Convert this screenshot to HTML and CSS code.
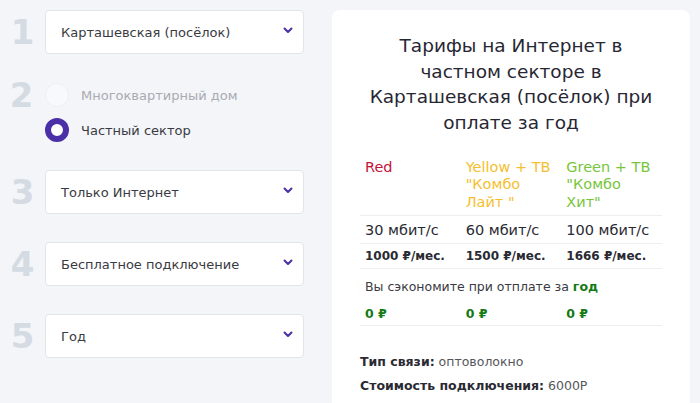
FILE: index.html
```html
<!DOCTYPE html>
<html lang="ru">
<head>
<meta charset="utf-8">
<link rel="stylesheet" href="styles.css">
</head>
<body>
<div class="page">
  <div class="steps">
    <div class="step step-1">
      <div class="num">1</div>
      <div class="select"><span>Карташевская (посёлок)</span><svg class="chev" width="10" height="7" viewBox="0 0 10 7"><path d="M1.5 1.5 L5 5 L8.5 1.5" fill="none" stroke="#4b2fa6" stroke-width="2" stroke-linecap="round" stroke-linejoin="round"/></svg></div>
    </div>
    <div class="step step-2">
      <div class="num">2</div>
      <div class="radios">
        <div class="radio"><span class="dot"></span><span class="rlabel muted">Многоквартирный дом</span></div>
        <div class="radio"><span class="dot on"></span><span class="rlabel">Частный сектор</span></div>
      </div>
    </div>
    <div class="step">
      <div class="num">3</div>
      <div class="select"><span>Только Интернет</span><svg class="chev" width="10" height="7" viewBox="0 0 10 7"><path d="M1.5 1.5 L5 5 L8.5 1.5" fill="none" stroke="#4b2fa6" stroke-width="2" stroke-linecap="round" stroke-linejoin="round"/></svg></div>
    </div>
    <div class="step">
      <div class="num">4</div>
      <div class="select"><span>Бесплатное подключение</span><svg class="chev" width="10" height="7" viewBox="0 0 10 7"><path d="M1.5 1.5 L5 5 L8.5 1.5" fill="none" stroke="#4b2fa6" stroke-width="2" stroke-linecap="round" stroke-linejoin="round"/></svg></div>
    </div>
    <div class="step">
      <div class="num">5</div>
      <div class="select"><span>Год</span><svg class="chev" width="10" height="7" viewBox="0 0 10 7"><path d="M1.5 1.5 L5 5 L8.5 1.5" fill="none" stroke="#4b2fa6" stroke-width="2" stroke-linecap="round" stroke-linejoin="round"/></svg></div>
    </div>
  </div>
  <div class="card">
    <h1 class="title">Тарифы на Интернет в частном секторе в Карташевская (посёлок) при оплате за год</h1>
    <table class="tariffs">
      <tr class="head">
        <td class="red">Red</td>
        <td class="yellow">Yellow + ТВ "Комбо Лайт "</td>
        <td class="green">Green + ТВ "Комбо Хит"</td>
      </tr>
      <tr class="speed">
        <td>30 мбит/с</td>
        <td>60 мбит/с</td>
        <td>100 мбит/с</td>
      </tr>
      <tr class="price">
        <td>1000 ₽/мес.</td>
        <td>1500 ₽/мес.</td>
        <td>1666 ₽/мес.</td>
      </tr>
      <tr class="save-note">
        <td colspan="3">Вы сэкономите при отплате за <b>год</b></td>
      </tr>
      <tr class="save">
        <td>0 ₽</td>
        <td>0 ₽</td>
        <td>0 ₽</td>
      </tr>
    </table>
    <p class="info"><b>Тип связи:</b> оптоволокно</p>
    <p class="info"><b>Стоимость подключения:</b> 6000Р</p>
  </div>
</div>
</body>
</html>
```
FILE: styles.css
```css
html, body {
  margin: 0;
  padding: 0;
  background: #f3f5f9;
  font-family: "DejaVu Sans", "Liberation Sans", sans-serif;
  color: #333;
}
.page {
  display: flex;
  align-items: flex-start;
  height: 403px;
  overflow: hidden;
}
.steps {
  width: 332px;
  flex: none;
  padding-top: 10px;
}
.step {
  display: flex;
  align-items: center;
  margin-top: 28px;
}
.step-1 { margin-top: 0; }
.step-2 { align-items: flex-start; margin-top: 29px; margin-bottom: 2px; }
.num {
  width: 45px;
  text-align: center;
  font-size: 34px;
  font-weight: bold;
  color: #d5dbe3;
  line-height: 40px;
}
.step-2 .num { margin-top: -8px; margin-left: -1px; margin-right: 1px; }
.select {
  width: 259px;
  height: 44px;
  box-sizing: border-box;
  background: #fff;
  border: 1px solid #e1e4e9;
  border-radius: 4px;
  display: flex;
  align-items: center;
  justify-content: space-between;
  padding: 1px 10px 0 15px;
  font-size: 13px;
  color: #3a3a42;
}
.chev { margin-top: -4px; }
.radios {
  display: flex;
  flex-direction: column;
  gap: 11px;
}
.radio {
  display: flex;
  align-items: center;
  height: 24px;
}
.dot {
  width: 24px;
  height: 24px;
  box-sizing: border-box;
  border-radius: 50%;
  background: #f8f9fc;
  border: 1px solid #eef0f4;
  margin-right: 12px;
}
.dot.on {
  background: #fff;
  border: 6px solid #4b2fa6;
}
.rlabel {
  font-size: 13px;
  color: #3a3a42;
}
.rlabel.muted { color: #a9abb2; }
.card {
  margin-top: 10px;
  width: 358px;
  height: 420px;
  flex: none;
  background: #fff;
  border-radius: 8px;
  box-sizing: border-box;
  padding: 23px 28px 0 28px;
}
.title {
  margin: 0 auto;
  width: 292px;
  text-align: center;
  font-size: 18.5px;
  font-weight: normal;
  line-height: 25.7px;
  color: #272733;
}
.tariffs {
  width: 100%;
  border-collapse: collapse;
  margin-top: 20px;
  table-layout: fixed;
}
.tariffs td {
  padding: 0 0 0 5px;
  vertical-align: top;
}
.head td {
  font-size: 14.5px;
  line-height: 17.5px;
  padding-top: 3px;
  padding-right: 8px;
  padding-bottom: 4px;
  border-bottom: 1px solid #eceef1;
}
.red { color: #c4123a; }
.yellow { color: #f5c030; }
.green { color: #77c63a; }
.speed td {
  font-size: 14.5px;
  height: 27px;
  vertical-align: middle;
  color: #2a2a33;
  border-bottom: 1px solid #eceef1;
}
.price td {
  font-size: 12px;
  font-weight: bold;
  height: 24px;
  vertical-align: middle;
  color: #2a2a33;
  border-bottom: 1px solid #eceef1;
}
.save-note td {
  font-size: 12.5px;
  color: #3a3a42;
  padding-top: 10px;
  height: 17px;
}
.save-note b { color: #157a15; }
.save td {
  font-size: 12.5px;
  font-weight: bold;
  color: #157a15;
  padding-top: 10px;
  height: 19px;
  border-bottom: 1px solid #eceef1;
}
.info {
  margin: 0;
  font-size: 12.5px;
  color: #55565c;
  line-height: 24px;
}
.info:first-of-type { margin-top: 24px; }
.info b { color: #2a2a33; }
```
